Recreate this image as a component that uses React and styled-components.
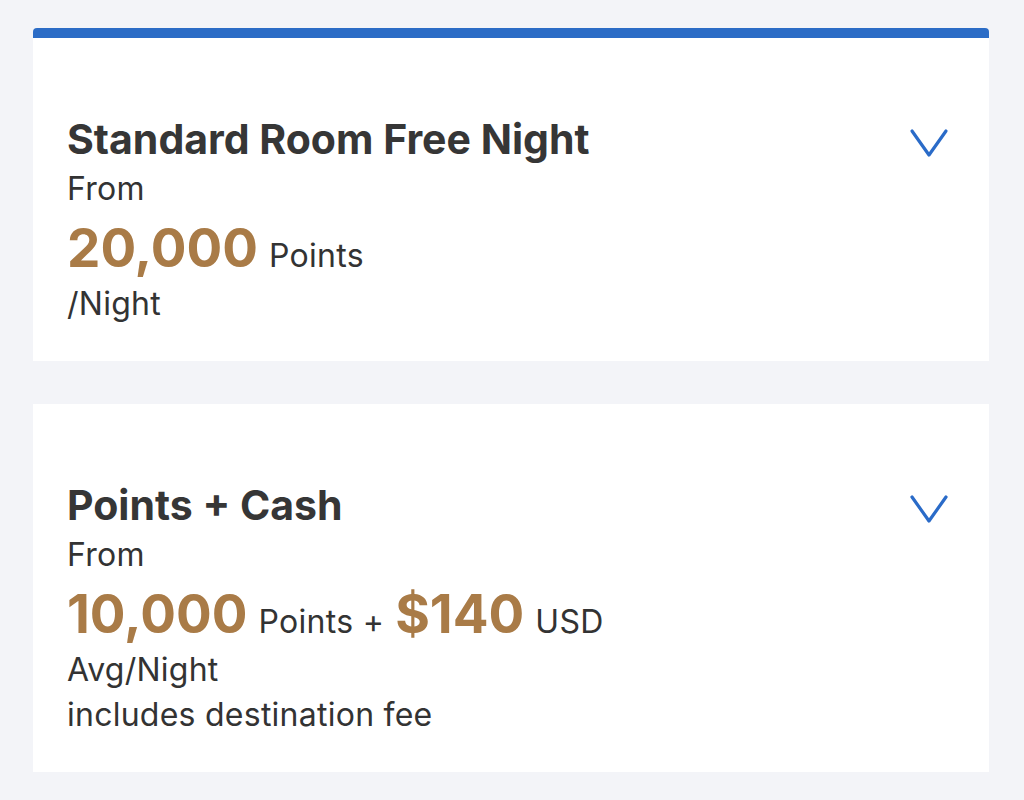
import React from "react";
import styled, { createGlobalStyle } from "styled-components";

const Global = createGlobalStyle`
  body {
    margin: 0;
    background: #f3f4f8;
    font-family: Inter, "Noto Sans", sans-serif;
    color: #333333;
  }
`;

const Page = styled.div`
  padding: 28px 35px 30px 33px;
  display: flex;
  flex-direction: column;
  gap: 43px;
`;

const Card = styled.div`
  background: #ffffff;
  border-top: ${(p) => (p.$accent ? "10px solid #2b6cc6" : "none")};
  border-radius: ${(p) => (p.$accent ? "4px 4px 0 0" : "0")};
  padding: 74px 40px 35px 34px;
  display: flex;
  justify-content: space-between;
  align-items: flex-start;
`;

const Info = styled.div`
  display: flex;
  flex-direction: column;
`;

const Title = styled.h2`
  margin: 0;
  font-size: 41px;
  font-weight: 700;
  line-height: 54px;
  color: #363636;
`;

const Line = styled.div`
  font-size: 32px;
  line-height: 45px;
  letter-spacing: 0.25px;
  color: #333333;
`;

const PriceRow = styled.div`
  box-sizing: border-box;
  display: flex;
  align-items: baseline;
  gap: 11px;
  height: 70px;
  padding-top: 4px;
  line-height: 66px;
`;

const Amount = styled.span`
  font-size: 53px;
  font-weight: 700;
  color: #a97b47;
`;

const Unit = styled.span`
  font-size: 32px;
  letter-spacing: 0.3px;
  color: #333333;
`;

const Chevron = styled.svg`
  width: 40px;
  height: 32px;
  margin-top: 15px;
  flex-shrink: 0;
`;

const Down = () => (
  <Chevron viewBox="0 0 40 32" fill="none">
    <path
      d="M3 4 L20 28 L37 4"
      stroke="#2a6bc8"
      strokeWidth="3.2"
      strokeLinecap="round"
      strokeLinejoin="round"
    />
  </Chevron>
);

export default function App() {
  return (
    <>
      <Global />
      <Page>
        <Card $accent>
          <Info>
            <Title>Standard Room Free Night</Title>
            <Line>From</Line>
            <PriceRow>
              <Amount>20,000</Amount>
              <Unit>Points</Unit>
            </PriceRow>
            <Line>/Night</Line>
          </Info>
          <Down />
        </Card>
        <Card>
          <Info>
            <Title>Points + Cash</Title>
            <Line>From</Line>
            <PriceRow>
              <Amount>10,000</Amount>
              <Unit>Points +</Unit>
              <Amount>$140</Amount>
              <Unit>USD</Unit>
            </PriceRow>
            <Line>Avg/Night</Line>
            <Line>includes destination fee</Line>
          </Info>
          <Down />
        </Card>
      </Page>
    </>
  );
}
